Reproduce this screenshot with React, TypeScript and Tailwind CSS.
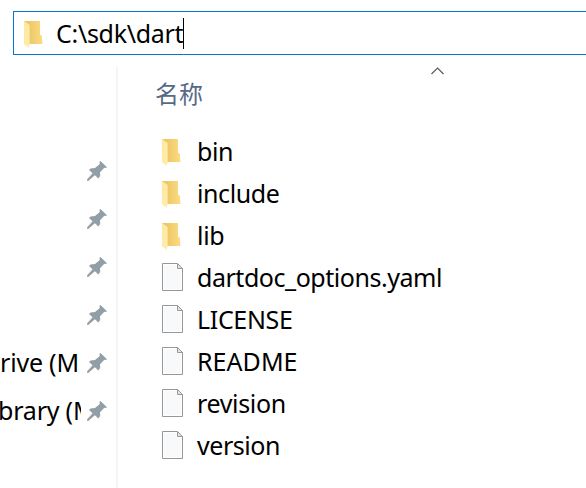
import React from "react";

function Folder() {
  return (
    <svg width="20" height="28" viewBox="0 0 20 28" className="block shrink-0">
      <defs>
        <linearGradient id="back" x1="0" y1="0" x2="1" y2="0">
          <stop offset="0.3" stopColor="#edc869" />
          <stop offset="1" stopColor="#fbdb80" />
        </linearGradient>
        <linearGradient id="front" x1="0" y1="0" x2="1" y2="1">
          <stop offset="0" stopColor="#ffe79a" />
          <stop offset="1" stopColor="#ffedb3" />
        </linearGradient>
      </defs>
      <path d="M17 15l2.5 8H17z" fill="#f1f1f1" />
      <path d="M0 0H16V13.6L18 15.6V23H5L0 20z" fill="url(#back)" />
      <path d="M16 13.6L18 15.6V23H15.5z" fill="#fbd97c" />
      <path d="M0 0L5.6 4V22.5L5 27L0 23.2z" fill="url(#front)" />
    </svg>
  );
}

function FileIcon() {
  return (
    <svg width="21" height="28" viewBox="0 0 21 28" className="block shrink-0">
      <path d="M.5 .5H15.5L20.5 5.5V27.5H.5z" fill="#f7f9fa" stroke="#979797" />
      <path d="M1.5 1.5H15V6H19.5V26.5H1.5z" fill="none" stroke="#fff" />
      <path d="M15.5 .5V5.5H20.5z" fill="#e4e4e4" stroke="#979797" />
    </svg>
  );
}

function Pin() {
  return (
    <svg width="20" height="20" viewBox="0 0 20 20" className="block shrink-0">
      <path
        d="M13.4 0L20 6.2L18.6 7L17.3 6.8L13 11.2L13.2 14.8L11.5 17.6L7.8 14.3L1.2 20L0 19.4V18.5L5.6 12.3L2 8.9L3.5 7.4L8 7L12.8 3L12.4 1.2z"
        fill="#929ea6"
      />
    </svg>
  );
}

const files = [
  { name: "bin", folder: true, spacing: "tracking-[-0.4px]" },
  { name: "include", folder: true, spacing: "tracking-[-0.4px]" },
  { name: "lib", folder: true, spacing: "tracking-[-0.3px]" },
  { name: "dartdoc_options.yaml", folder: false, spacing: "tracking-[-0.46px]" },
  { name: "LICENSE", folder: false, spacing: "tracking-[-0.35px]" },
  { name: "README", folder: false, spacing: "tracking-[0.05px]" },
  { name: "revision", folder: false, spacing: "tracking-[-0.35px]" },
  { name: "version", folder: false, spacing: "tracking-[-0.45px]" },
];

const pinned = [
  { label: "", indent: "" },
  { label: "", indent: "" },
  { label: "", indent: "" },
  { label: "", indent: "" },
  { label: "rive (M", indent: "" },
  { label: "brary (M", indent: "-indent-[2px]" },
];

export default function App() {
  return (
    <div className="flex h-[488px] w-[586px] flex-col overflow-hidden bg-white pt-[11px] font-['Noto_Sans','Noto_Sans_CJK_SC',sans-serif] text-[25px] text-black">
      <div className="ml-[13px] flex h-11 shrink-0 border border-r-0 border-[#0078d7] pl-[10px]">
        <div className="pt-[9px]">
          <Folder />
        </div>
        <span className="ml-[12px] h-[42px] whitespace-pre leading-[42px] tracking-[-0.3px]">
          C:\sdk\dart
        </span>
        <span className="mt-[6px] h-[31px] w-px bg-black" />
      </div>

      <div className="flex min-h-0 flex-1 pt-3">
        <aside className="w-[116px] shrink-0 pt-[80px]">
          {pinned.map(({ label, indent }, i) => (
            <div key={i} className="flex h-12">
              <span
                className={`block h-12 w-[81px] overflow-hidden whitespace-pre leading-[46px] tracking-[-0.2px] ${indent}`}
              >
                {label}
              </span>
              <div className="ml-[6px] pt-[14px]">
                <Pin />
              </div>
            </div>
          ))}
        </aside>

        <main className="min-w-0 flex-1 border-l-2 border-[#f5f5f5]">
          <div className="flex h-[64px] pl-[37px]">
            <span className="w-[276px] pt-[10px] font-['Noto_Sans_CJK_SC',sans-serif] text-[24px] font-normal leading-[32px] text-[#566a88]">
              名称
            </span>
            <svg width="13" height="8" viewBox="0 0 13 8" className="block">
              <path d="M.5 7L6.5 1L12.5 7" fill="none" stroke="#5a5a5a" strokeWidth="1.2" />
            </svg>
          </div>
          {files.map((f) => (
            <div key={f.name} className="flex h-[42px] pl-[44px]">
              <div className={f.folder ? "w-[35px] pt-[8px]" : "w-[35px] pt-[6px]"}>
                {f.folder ? <Folder /> : <FileIcon />}
              </div>
              <span className={`whitespace-pre leading-[40px] ${f.spacing}`}>{f.name}</span>
            </div>
          ))}
        </main>
      </div>
    </div>
  );
}
